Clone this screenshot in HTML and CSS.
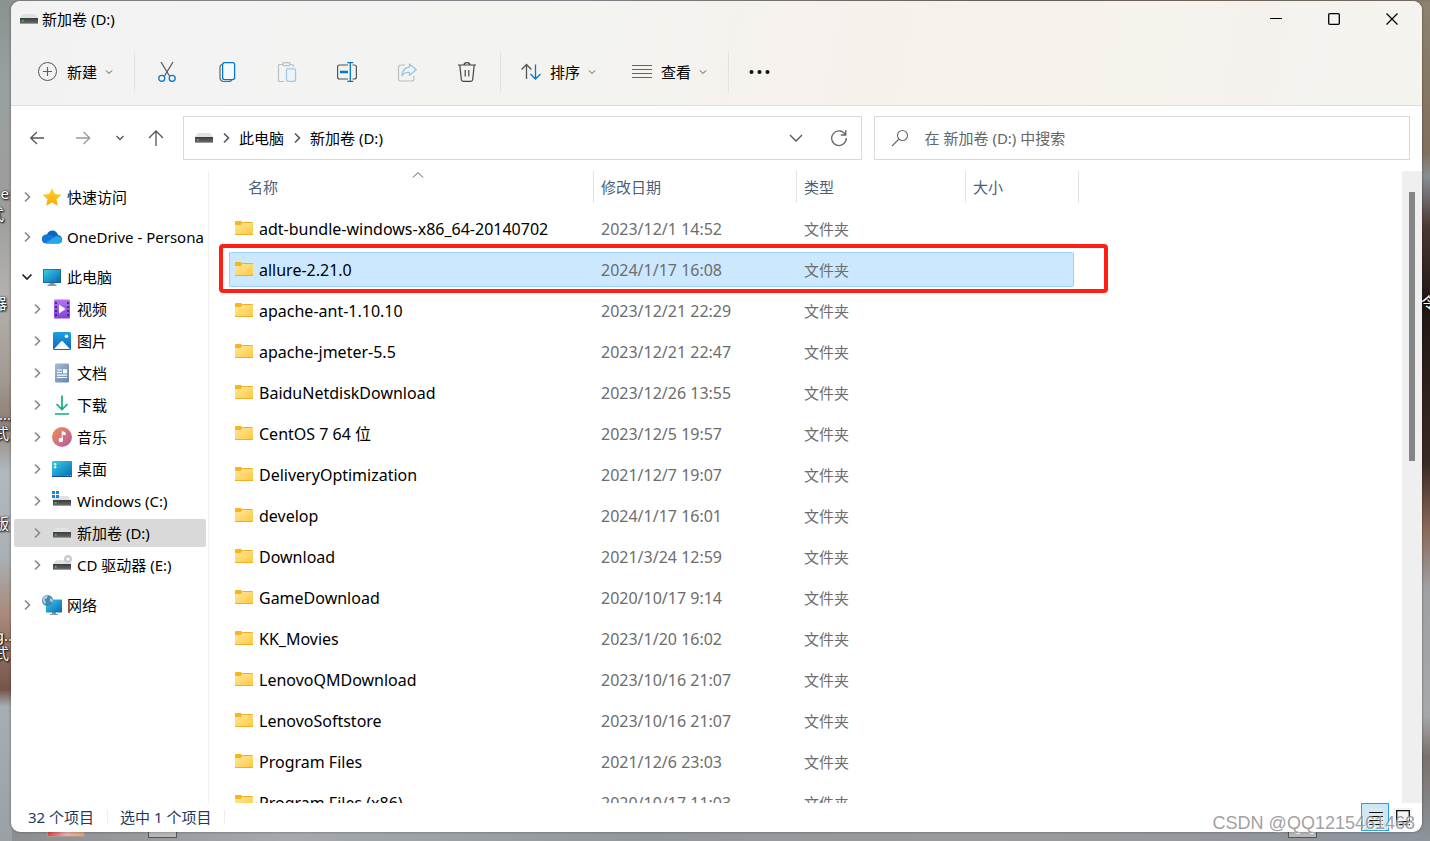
FILE: index.html
```html
<!DOCTYPE html>
<html lang="zh-CN">
<head>
<meta charset="utf-8">
<title>新加卷 (D:)</title>
<link rel="stylesheet" href="styles.css">
</head>
<body>
<svg class="defs" aria-hidden="true">
  <defs>
    <linearGradient id="gFolder" x1="0" y1="0" x2="1" y2="1"><stop offset="0" stop-color="#ffe7a0"/><stop offset="1" stop-color="#fec93c"/></linearGradient>
    <linearGradient id="gDrive" x1="0" y1="0" x2="0" y2="1"><stop offset="0" stop-color="#3b3b3b"/><stop offset="1" stop-color="#666"/></linearGradient>
    <linearGradient id="gScreen" x1="0" y1="0" x2="1" y2="1"><stop offset="0" stop-color="#35d1e6"/><stop offset="1" stop-color="#0a66b5"/></linearGradient>
    <linearGradient id="gVideo" x1="0" y1="0" x2="0" y2="1"><stop offset="0" stop-color="#b274f0"/><stop offset="1" stop-color="#8440d8"/></linearGradient>
    <linearGradient id="gPic" x1="0" y1="0" x2="0" y2="1"><stop offset="0" stop-color="#1fa0e2"/><stop offset="1" stop-color="#0b67bd"/></linearGradient>
    <linearGradient id="gDoc" x1="0" y1="0" x2="1" y2="1"><stop offset="0" stop-color="#a5bdd3"/><stop offset="1" stop-color="#6485a8"/></linearGradient>
    <linearGradient id="gMusic" x1="0" y1="0" x2="1" y2="1"><stop offset="0" stop-color="#f29150"/><stop offset="1" stop-color="#b25aa6"/></linearGradient>
    <linearGradient id="gStar" x1="0" y1="0" x2="0" y2="1"><stop offset="0" stop-color="#ffd426"/><stop offset="1" stop-color="#faa80c"/></linearGradient>
    <symbol id="folder" viewBox="0 0 18 14"><path d="M0 1Q0 0 1 0H6l2 2-2 2H0z" fill="#f9b41a"/><path d="M0 4h6l2-2h9.500q.5 0 .5.500V13.500H0z" fill="url(#gFolder)"/><path d="M8 1h9q1 0 1 1v0H7zM0 13h18v1H0z" fill="#eeae25"/></symbol>
    <symbol id="drive" viewBox="0 0 18 10"><path d="M3 0h12l3 4H0z" fill="#dfe1e4"/><rect y="4" width="18" height="6" fill="#999"/><rect y="4" width="18" height="5" fill="url(#gDrive)"/><rect x="2" y="6" width="1.500" height="1.500" fill="#2eea3c"/></symbol>
    <symbol id="chev" viewBox="0 0 8 12"><path d="M2 1.500 6.500 6 2 10.500" fill="none" stroke="currentColor" stroke-width="1.600"/></symbol>
    <symbol id="down" viewBox="0 0 8 8"><path d="M1 2.500 4 5.500 7 2.500" fill="none" stroke="currentColor" stroke-width="1"/></symbol>
    <symbol id="screen" viewBox="0 0 20 18"><path d="M7.500 14h5v2.500h2V18h-9v-1.500h2z" fill="#8b949b"/><rect x="1" y="1" width="18" height="14" rx=".6" fill="#175f85"/><rect x="1.700" y="1.700" width="16.600" height="12.600" fill="url(#gScreen)"/></symbol>
  </defs>
</svg>

<div class="desktop" aria-hidden="true">
  <span class="label l1">e</span><span class="label l2">式</span><span class="label l3">器</span><span class="label l4">...</span><span class="label l5">式</span><span class="label l6">版</span><span class="label l7">g..</span><span class="label l8">式</span><span class="label r1">令</span>
  <span class="thing t1"></span><span class="thing t2"></span><span class="thing t3"></span>
</div>

<main class="window">
  <header class="chrome">
    <div class="titlebar">
      <svg class="drive"><use href="#drive"/></svg>
      <h1 class="title">新加卷 (D:)</h1>
      <button class="wbtn" aria-label="最小化"><svg width="12" height="12"><path d="M0 5.500h12" stroke="#000"/></svg></button>
      <button class="wbtn" aria-label="最大化"><svg width="12" height="12"><rect x=".7" y=".7" width="10.600" height="10.600" rx="1" fill="none" stroke="#000" stroke-width="1.300"/></svg></button>
      <button class="wbtn" aria-label="关闭"><svg width="12" height="12"><path d="M.5.5l11 11M11.500.5l-11 11" stroke="#000" stroke-width="1.200"/></svg></button>
    </div>
    <div class="toolbar">
      <button class="menu first"><svg width="20" height="20" fill="none"><circle cx="9.500" cy="9.500" r="9" stroke="#555"/><path d="M9.500 5v9M5 9.500h9" stroke="#0078d4" stroke-width="1.200"/></svg><span>新建</span><svg class="dn"><use href="#down"/></svg></button>
      <i class="sep"></i>
      <button class="tool" aria-label="剪切"><svg width="20" height="20" fill="none"><path d="M4 0l8.500 14M16 0 7.500 14" stroke="#555" stroke-width="1.200"/><circle cx="4.800" cy="16.300" r="3" stroke="#0078d4" stroke-width="1.300"/><circle cx="15.200" cy="16.300" r="3" stroke="#0078d4" stroke-width="1.300"/></svg></button>
      <button class="tool" aria-label="复制"><svg width="20" height="20" fill="none"><path d="M5 2.500Q3 3 3 5v10q0 4.500 4 4.500h5q2 0 2.500-1.500" stroke="#666" stroke-width="1.200"/><rect x="5.600" y=".6" width="12" height="17" rx="2" fill="#f6fafd" stroke="#0078d4" stroke-width="1.300"/></svg></button>
      <button class="tool" aria-label="粘贴"><svg width="20" height="20" fill="none"><path d="M7 19.500H2.500Q1.500 19.500 1.500 18.500V3.500q0-1 1-1H6m7 0h2.500q1 0 1 1V5M6 1.200Q6 .6 7 .6h5q1 0 1 .6v1.500q0 1-1 1H7q-1 0-1-1z" stroke="#bfbfbf" stroke-width="1.200"/><rect x="9.500" y="6.800" width="9" height="12.600" rx="1.300" fill="#eef5fa" stroke="#9ccbed" stroke-width="1.300"/></svg></button>
      <button class="tool" aria-label="重命名"><svg width="20" height="20" fill="none"><path d="M11 3H2.500Q.6 3 .6 5v10q0 2 1.900 2H11M15.500 3h1.500q2.400 0 2.400 2v10q0 2-2.400 2h-1.500" stroke="#555" stroke-width="1.200"/><path d="M3 10h8" stroke="#0078d4" stroke-width="2.400"/><path d="M13.300 1v18M10.300.7h6M10.300 19.300h6" stroke="#0078d4" stroke-width="1.300"/></svg></button>
      <button class="tool" aria-label="共享"><svg width="20" height="20" fill="none"><path d="M8 3H4Q1.500 3 1.500 5.500v11Q1.500 19 4 19H14.500q2.500 0 2.500-2.500V14" stroke="#bfbfbf" stroke-width="1.200"/><path d="M12.500 2l6.700 5.800-6.700 5.500V10.500Q7.500 10 5 13.700 5.500 5.800 12.500 5z" stroke="#93c6ea" stroke-width="1.300" stroke-linejoin="round"/></svg></button>
      <button class="tool" aria-label="删除"><svg width="20" height="20" fill="none" stroke="#444" stroke-width="1.200"><path d="M1 3h18M7 3q0-2.400 3-2.400T13 3M2.800 3l1.500 14.500q.2 1.900 2 1.900h7.400q1.800 0 2-1.900L17.200 3M8.200 8v6.500M11.800 8v6.500"/></svg></button>
      <i class="sep"></i>
      <button class="menu"><svg width="20" height="20" fill="none" stroke-width="1.300"><path d="M5.500 17V2.500M.6 7.500l4.900-5 4.900 5" stroke="#555"/><path d="M14.500 2.500v14.300M9.500 12l5 5 5-5" stroke="#0078d4"/></svg><span>排序</span><svg class="dn"><use href="#down"/></svg></button>
      <button class="menu"><svg width="20" height="20"><path d="M0 3.500h20M0 7.500h20M0 11.500h20M0 15.500h20" stroke="#666" stroke-width="1.100"/></svg><span>查看</span><svg class="dn"><use href="#down"/></svg></button>
      <i class="sep"></i>
      <button class="menu" aria-label="更多"><svg width="22" height="20" fill="#111"><circle cx="2.500" cy="10" r="2"/><circle cx="10.500" cy="10" r="2"/><circle cx="18.500" cy="10" r="2"/></svg></button>
    </div>
  </header>

  <nav class="navrow">
    <button class="nbtn" aria-label="后退"><svg width="16" height="16" fill="none"><path d="M15 8H2M8 2 1.700 8 8 14" stroke="#555" stroke-width="1.300"/></svg></button>
    <button class="nbtn" aria-label="前进"><svg width="16" height="16" fill="none"><path d="M1 8h13M8.500 2l6.300 6-6.300 6" stroke="#999" stroke-width="1.300"/></svg></button>
    <button class="nbtn recent" aria-label="最近"><svg width="8" height="8" fill="none"><path d="M.5 2 4 5.500 7.500 2" stroke="#555" stroke-width="1.300"/></svg></button>
    <button class="nbtn" aria-label="上移"><svg width="16" height="18" fill="none"><path d="M8 17V2M1 9l7-7 7 7" stroke="#555" stroke-width="1.300"/></svg></button>
    <div class="address">
      <svg class="drive"><use href="#drive"/></svg>
      <svg class="ch"><use href="#chev"/></svg>
      <a href="#pc">此电脑</a>
      <svg class="ch"><use href="#chev"/></svg>
      <a href="#d">新加卷 (D:)</a>
      <button class="nbtn push" aria-label="历史"><svg width="14" height="10" fill="none"><path d="M1 2l6 6 6-6" stroke="#555" stroke-width="1.300"/></svg></button>
      <button class="nbtn" aria-label="刷新"><svg width="18" height="18" fill="none" stroke="#666" stroke-width="1.300"><path d="M15.300 5.500A7.300 7.300 0 1 0 16.300 9M15.800 1v5h-5"/></svg></button>
    </div>
    <label class="search">
      <svg width="18" height="18" fill="none" stroke="#666" stroke-width="1.100"><circle cx="11.500" cy="6.500" r="5"/><path d="M8 10l-7 7"/></svg>
      <input type="text" placeholder="在 新加卷 (D:) 中搜索" aria-label="搜索">
    </label>
  </nav>

  <div class="body">
    <aside class="tree">
      <a class="node" href="#q"><svg class="ch"><use href="#chev"/></svg><svg class="ic" viewBox="0 0 20 20"><path d="M10 1l2.800 6 6.500.8-4.800 4.500 1.300 6.500L10 15.600l-5.800 3.200 1.300-6.500L.7 7.800 7.200 7z" fill="url(#gStar)"/></svg><span>快速访问</span></a>
      <a class="node top" href="#o"><svg class="ch"><use href="#chev"/></svg><svg class="ic" viewBox="0 0 20 20"><path d="M5 16.500Q0 16.500 0 12t5-4.500Q6.500 3.500 10.500 3.500T16 8q4 .5 4 4.500t-4 4z" fill="#0d65bd"/><path d="M5 7.500q5-.5 8 2.500l-8.500 6.200Q0 16 0 12t5-4.500z" fill="#0f7bd6"/><path d="M3.500 16l9-6q2-1.500 4.500-.5 3 .8 3 3.500 0 3.500-4 3.500H5z" fill="#29a3ea"/></svg><span>OneDrive - Persona</span></a>
      <a class="node top" href="#pc"><svg class="ch open" viewBox="0 0 12 8"><path d="M1.500 1.500 6 6l4.500-4.500" fill="none" stroke="#222" stroke-width="1.700"/></svg><svg class="ic"><use href="#screen"/></svg><span>此电脑</span></a>
      <a class="node sub" href="#v"><svg class="ch"><use href="#chev"/></svg><svg class="ic" viewBox="0 0 20 20"><rect x="2" y=".5" width="16" height="19" rx="1" fill="url(#gVideo)"/><path d="M7 5.500l6.500 4.500L7 14.500z" fill="#fff"/><path d="M4 3v15M16 3v15" stroke="#43207a" stroke-width="1.800" stroke-dasharray="2 2"/></svg><span>视频</span></a>
      <a class="node sub" href="#p"><svg class="ch"><use href="#chev"/></svg><svg class="ic" viewBox="0 0 20 20"><rect x="1" y="1" width="18" height="18" rx="1.500" fill="url(#gPic)"/><path d="M2 18l7-7.500q1-.8 2 0L18 18z" fill="#f2f8fc"/><circle cx="14.500" cy="5.300" r="1.700" fill="#fff"/></svg><span>图片</span></a>
      <a class="node sub" href="#w"><svg class="ch"><use href="#chev"/></svg><svg class="ic" viewBox="0 0 20 20"><rect x="3" y=".5" width="14" height="19" rx="1.200" fill="url(#gDoc)"/><path d="M5 7h5M5 9.500h5M5 12.200h10M5 14.500h10" stroke="#fff" stroke-width="1.200"/><rect x="11" y="6.300" width="4" height="4" fill="#fff"/></svg><span>文档</span></a>
      <a class="node sub" href="#x"><svg class="ch"><use href="#chev"/></svg><svg class="ic" viewBox="0 0 20 20"><path d="M10 .5v14M4.500 9l5.500 5.500L15.500 9M3 19h14" fill="none" stroke="#14a98a" stroke-width="1.700"/></svg><span>下载</span></a>
      <a class="node sub" href="#y"><svg class="ch"><use href="#chev"/></svg><svg class="ic" viewBox="0 0 20 20"><circle cx="10" cy="10" r="10" fill="url(#gMusic)"/><circle cx="8.800" cy="13" r="2.200" fill="#fff"/><path d="M10.200 13V4.500l3 1.300v2l-3-1" stroke="#fff" fill="#fff"/></svg><span>音乐</span></a>
      <a class="node sub" href="#z"><svg class="ch"><use href="#chev"/></svg><svg class="ic" viewBox="0 0 20 20"><rect y="2" width="20" height="16" rx="1" fill="url(#gScreen)"/><path d="M2.500 4.500h1.500v1.500H2.500zM2.500 7.500h1.500V9H2.500zM15 16.500h1M18 16.500h1" fill="#fff" stroke="#fff" stroke-width=".6"/><path d="M0 17h20v1H0z" fill="#0d4f94"/></svg><span>桌面</span></a>
      <a class="node sub" href="#c"><svg class="ch"><use href="#chev"/></svg><svg class="ic" viewBox="0 0 20 20"><path d="M4 5h12l3 4H1z" fill="#dfe1e4"/><rect x="1" y="9" width="18" height="6" fill="#999"/><rect x="1" y="9" width="18" height="5" fill="url(#gDrive)"/><rect x="3" y="11" width="1.500" height="1.500" fill="#2eea3c"/><path d="M0 0h3v3H0zM4 0h3v3H4zM0 4h3v3H0zM4 4h3v3H4z" fill="#1686d9"/></svg><span>Windows (C:)</span></a>
      <a class="node sub current" href="#d"><svg class="ch"><use href="#chev"/></svg><svg class="ic" viewBox="0 0 20 20"><use href="#drive" x="1" y="5" width="18" height="10"/></svg><span>新加卷 (D:)</span></a>
      <a class="node sub" href="#e"><svg class="ch"><use href="#chev"/></svg><svg class="ic" viewBox="0 0 20 20"><path d="M4 5h12l3 4H1z" fill="#dfe1e4"/><rect x="1" y="9" width="18" height="6" fill="#999"/><rect x="1" y="9" width="18" height="5" fill="url(#gDrive)"/><rect x="3" y="11" width="1.500" height="1.500" fill="#2eea3c"/><circle cx="16" cy="4" r="2.800" fill="#fff" stroke="#c5ccd2" stroke-width="2.400"/></svg><span>CD 驱动器 (E:)</span></a>
      <a class="node top" href="#n"><svg class="ch"><use href="#chev"/></svg><svg class="ic" viewBox="0 0 20 20"><path d="M10 17h4v2h2v1H8v-1h2z" fill="#8b949b"/><rect x="4" y="4.500" width="16" height="13" rx=".5" fill="url(#gScreen)"/><circle cx="5.500" cy="5.500" r="5.500" fill="#4889b4"/><path d="M1 3q2-3 5-2.500L5 3 2.500 4.500 4 7 3 9Q0 7 1 3zM8 3l2.500 1.500v3L8 6z" fill="#a9d2ea"/></svg><span>网络</span></a>
    </aside>

    <section class="list">
      <table class="files">
        <colgroup><col class="c-name"><col class="c-date"><col class="c-type"><col class="c-size"></colgroup>
        <thead><tr><th>名称<svg class="sort" width="12" height="6" fill="none"><path d="M1 5.500l5-5 5 5" stroke="#555"/></svg></th><th>修改日期</th><th>类型</th><th>大小</th></tr></thead>
        <tbody>
          <tr><td><svg class="fo"><use href="#folder"/></svg>adt-bundle-windows-x86_64-20140702</td><td>2023/12/1 14:52</td><td>文件夹</td><td></td></tr>
          <tr class="selected"><td><svg class="fo"><use href="#folder"/></svg>allure-2.21.0</td><td>2024/1/17 16:08</td><td>文件夹</td><td><span class="marker"></span></td></tr>
          <tr><td><svg class="fo"><use href="#folder"/></svg>apache-ant-1.10.10</td><td>2023/12/21 22:29</td><td>文件夹</td><td></td></tr>
          <tr><td><svg class="fo"><use href="#folder"/></svg>apache-jmeter-5.5</td><td>2023/12/21 22:47</td><td>文件夹</td><td></td></tr>
          <tr><td><svg class="fo"><use href="#folder"/></svg>BaiduNetdiskDownload</td><td>2023/12/26 13:55</td><td>文件夹</td><td></td></tr>
          <tr><td><svg class="fo"><use href="#folder"/></svg>CentOS 7 64 位</td><td>2023/12/5 19:57</td><td>文件夹</td><td></td></tr>
          <tr><td><svg class="fo"><use href="#folder"/></svg>DeliveryOptimization</td><td>2021/12/7 19:07</td><td>文件夹</td><td></td></tr>
          <tr><td><svg class="fo"><use href="#folder"/></svg>develop</td><td>2024/1/17 16:01</td><td>文件夹</td><td></td></tr>
          <tr><td><svg class="fo"><use href="#folder"/></svg>Download</td><td>2021/3/24 12:59</td><td>文件夹</td><td></td></tr>
          <tr><td><svg class="fo"><use href="#folder"/></svg>GameDownload</td><td>2020/10/17 9:14</td><td>文件夹</td><td></td></tr>
          <tr><td><svg class="fo"><use href="#folder"/></svg>KK_Movies</td><td>2023/1/20 16:02</td><td>文件夹</td><td></td></tr>
          <tr><td><svg class="fo"><use href="#folder"/></svg>LenovoQMDownload</td><td>2023/10/16 21:07</td><td>文件夹</td><td></td></tr>
          <tr><td><svg class="fo"><use href="#folder"/></svg>LenovoSoftstore</td><td>2023/10/16 21:07</td><td>文件夹</td><td></td></tr>
          <tr><td><svg class="fo"><use href="#folder"/></svg>Program Files</td><td>2021/12/6 23:03</td><td>文件夹</td><td></td></tr>
          <tr><td><svg class="fo"><use href="#folder"/></svg>Program Files (x86)</td><td>2020/10/17 11:03</td><td>文件夹</td><td></td></tr>
        </tbody>
      </table>
    </section>
    <div class="scroll"><div class="thumb"></div></div>
  </div>

  <footer class="status">
    <span class="cell">32 个项目</span><span class="cell">选中 1 个项目</span>
    <button class="view on" aria-label="详细信息"><svg width="28" height="28" stroke="#111"><rect x="5" y="5" width="18" height="20" fill="#d8e9f1" stroke="none"/><path d="M8 9.500h14M8 13.500h14M8 17.500h14M8 21.500h14"/></svg></button>
    <button class="view" aria-label="大图标"><svg width="28" height="28" fill="none" stroke="#111" stroke-width="1.300"><rect x="4" y="5" width="19" height="20" fill="#f3f3f3" stroke="none"/><path d="M7.700 7.700h12.600v11H7.700zM7 21.500h14"/></svg></button>
  </footer>
</main>
<div class="watermark">CSDN @QQ1215461468</div>
</body>
</html>
```

FILE: styles.css
```css
* { box-sizing: border-box; }

body {
  position: relative;
  display: flex;
  height: 100vh;
  margin: 0;
  padding: 1px 8px 9px 11px;
  overflow: hidden;
  font: 15px/20px "Noto Sans", "Noto Sans CJK SC", sans-serif;
  color: #000;
  background:
    linear-gradient(to right, #8f9292 0, transparent 40%, #7a6d60 70%, #857b70) top / 100% 2px no-repeat,
    linear-gradient(#8d8371 0, #80705c 18%, #8a8e95 21%, #4a3832 27%, #201713 36%, #3a2924 55%, #8b6a5d 63%, #a0a1a3 70%, #a7a8aa 85%, #79716c 90%, #8e959c) right / 12px 100% no-repeat,
    linear-gradient(#8a9290 0, #9aa0a0 10%, #9d9d9b 25%, #b3b1ae 35%, #a29a93 45%, #8f8074 50%, #b2b8bd 56%, #aab0b4 66%, #a98a7c 73%, #75554a 82%, #a7adb1 84%, #9aa0a3) left / 12px 100% no-repeat,
    linear-gradient(to right, #8b8d8f, #a5a9ad 20%, #92979c 45%, #9b9b9d 70%, #8d949d);
}

button {
  display: flex;
  align-items: center;
  margin: 0;
  padding: 0;
  border: 0;
  background: none;
  font: inherit;
  color: inherit;
}

a { color: inherit; text-decoration: none; }
svg { display: block; flex: none; }
.defs { position: absolute; width: 0; height: 0; }

.desktop { position: absolute; inset: 0; overflow: hidden; }
.label {
  position: absolute;
  right: calc(100% - 9px);
  color: #fff;
  text-shadow: 1px 1px 2px #000, 0 0 2px #000;
}
.l1 { top: 183px; }
.l2 { top: 204px; right: calc(100% - 4px); }
.l3 { top: 293px; right: calc(100% - 7px); }
.l4 { top: 404px; right: calc(100% - 11px); }
.l5 { top: 423px; }
.l6 { top: 513px; }
.l7 { top: 625px; right: calc(100% - 12px); }
.l8 { top: 643px; }
.r1 { top: 292px; right: -6px; }
.thing { position: absolute; bottom: 4px; height: 12px; width: 29px; border: 1px solid #555; background: #b8b8b8; }
.t1 { left: 47px; width: 38px; border-color: #a99; background: linear-gradient(to right, #d44, #e9b0a8, #d9a86c); }
.t2 { left: 148px; bottom: 3px; }
.t3 { right: 113px; bottom: 3px; }

.window {
  position: relative;
  display: flex;
  flex: 1;
  flex-direction: column;
  min-width: 0;
  overflow: hidden;
  border-radius: 9px;
  background: #fff;
  box-shadow: 0 0 3px #0006;
}

.chrome {
  border-bottom: 1px solid #dfdcda;
  background: linear-gradient(100deg, #f2f2f3 0, #f3f3f2 20%, #f4f3ef 45%, #f7f1ec 60%, #f7f2eb 72%, #f5f2ee 88%, #f4f4ef);
}
.titlebar { display: flex; align-items: center; height: 35px; margin-bottom: 2px; padding: 0 1px 0 9px; }
.drive { width: 18px; height: 10px; }
.title { flex: 1; margin: 0 0 0 4px; font-size: 15px; font-weight: 400; }
.wbtn { justify-content: center; width: 58px; height: 35px; }

.toolbar { display: flex; align-items: center; height: 67px; }
.menu { gap: 9px; height: 40px; padding: 0 18px; }
.first { margin-left: 9px; }
.dn { width: 8px; height: 8px; margin-left: -1px; color: #555; }
.tool { justify-content: center; width: 60px; height: 40px; }
.sep { width: 1px; height: 40px; margin: 0 2px 0 3px; background: #e3e2df; }

.navrow { display: flex; align-items: center; gap: 24px; padding: 10px 12px 5px 18px; }
.nbtn + .nbtn { margin-left: 6px; }
.recent + .nbtn { margin-left: 0; }
.nbtn.recent { margin-left: 1px; }
.address, .search {
  display: flex;
  align-items: center;
  height: 44px;
  border: 1px solid #d9d9d9;
}
.address { flex: 565; gap: 10px; margin-left: -5px; padding: 0 13px 0 11px; }
.address .ch { margin: 0 -1px; }
.ch { width: 8px; height: 12px; color: #555; }
.push { margin-left: auto; }
.address .nbtn + .nbtn { margin-left: 17px; }
.search { flex: 435; gap: 16px; margin-left: -12px; padding: 0 16px; }
.search input { flex: 1; min-width: 0; padding: 0; border: 0; outline: 0; background: none; font: inherit; }
.search input::placeholder { color: #666; opacity: 1; }

.body { display: flex; flex: 1; min-height: 0; }
.tree {
  width: 198px;
  margin-top: 6px;
  padding: 12px 2px 0 3px;
  border-right: 1px solid #f0f0f0;
}
.node {
  display: flex;
  align-items: center;
  height: 28px;
  margin-bottom: 4px;
  padding-left: 9px;
  overflow: hidden;
  border-radius: 2px;
  white-space: nowrap;
}
.node.top { margin-top: 12px; }
.node.sub { padding-left: 19px; }
.node .ch { color: #888; }
.node .open { width: 12px; height: 8px; margin: 0 -2px; }
.ic { width: 20px; height: 20px; margin: 0 5px 0 11px; }
.current { background: #d9d9d9; }

.list { flex: 1; min-width: 0; padding-left: 20px; overflow: hidden; }
.files { width: 845px; border-spacing: 0 6px; table-layout: fixed; }
.c-name { width: 365px; }
.c-date { width: 203px; }
.c-type { width: 169px; }
.files th, .files td { padding: 0 0 0 7px; text-align: left; font-weight: 400; white-space: nowrap; }
.files th { position: relative; height: 34px; padding-bottom: 2px; color: #4c607a; background: linear-gradient(#e3e3e3, #e3e3e3) right top / 1px 32px no-repeat; }
.files th:first-child { padding-left: 19px; }
.files th:last-child { background: none; }
.files th:last-child::after { content: ""; position: absolute; top: 0; right: -5px; width: 1px; height: 32px; background: #e3e3e3; }
.sort { position: absolute; top: 1px; left: 50%; }
.files td { height: 35px; color: #6d6d6d; }
.files td:first-child { padding-left: 6px; color: #000; }
.files td:nth-child(-n+2) { font-size: 16px; }
.fo { display: inline-block; width: 18px; height: 14px; margin-right: 6px; vertical-align: 0; }
.selected { position: relative; }
.selected td { border: 1px solid #99d1ff; border-width: 1px 0; background: #cce8ff; }
.selected td:first-child { border-left-width: 1px; padding-left: 5px; border-radius: 2px 0 0 2px; }
.selected td:last-child { border-right-width: 1px; border-radius: 0 2px 2px 0; }
.marker { position: absolute; inset: -8px -34px -6px -10px; border: 4px solid #ff1f14; border-radius: 4px; }

.scroll { width: 20px; margin-top: 6px; padding: 21px 7px 0; background: #efefef; }
.thumb { height: 44%; background: #868686; }

.status { display: flex; align-items: center; height: 29px; padding: 0 5px 1px 17px; color: #1e395b; }
.cell { margin-right: 12px; padding-right: 13px; border-right: 1px solid #eee; line-height: 14px; }
.view { width: 28px; height: 28px; }
.view.on { margin-left: auto; outline: 1px solid #26a0da; outline-offset: -1px; background: #cbe8f6; }

.watermark {
  position: absolute;
  right: 15px;
  bottom: 8px;
  font: 18px/20px "Liberation Sans", sans-serif;
  color: #888c;
  text-shadow: 1px 1px 1px #fff;
}
```
